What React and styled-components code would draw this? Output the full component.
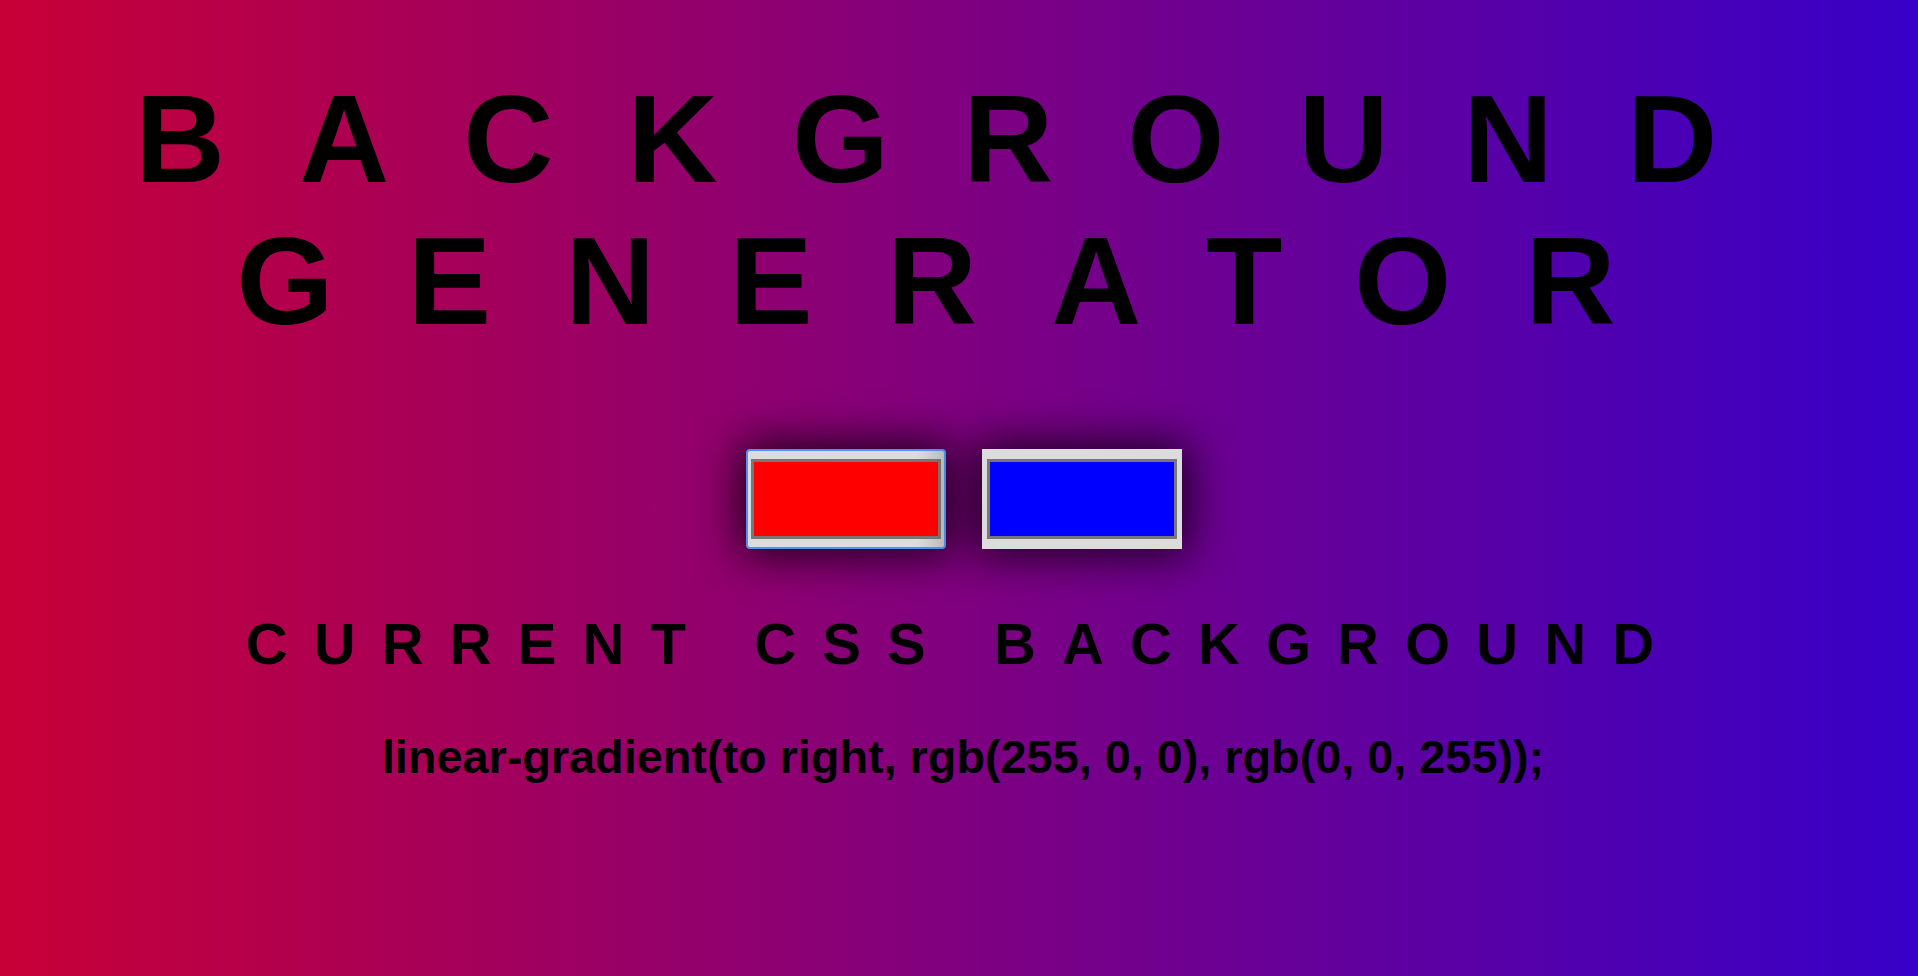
import { useState } from 'react'
import styled, { createGlobalStyle } from 'styled-components'

const GlobalStyle = createGlobalStyle`
    html, body {
        margin: 0;
        padding: 0;
    }
    body {
        font-family: "Liberation Sans", Arial, sans-serif;
        color: #000;
    }
`

const hexToRgb = (hex) => {
    const n = parseInt(hex.slice(1), 16);
    return `rgb(${(n >> 16) & 255}, ${(n >> 8) & 255}, ${n & 255})`;
}

const App = () => {
    const [color1, setColor1] = useState("#ff0000");
    const [color2, setColor2] = useState("#0000ff");

    return (
        <Page $from={color1} $to={color2}>
            <GlobalStyle />
            <Title>Background Generator</Title>
            <Pickers>
                <ColorInput type="color" value={color1} $focused onChange={(e) => setColor1(e.target.value)} />
                <ColorInput type="color" value={color2} onChange={(e) => setColor2(e.target.value)} />
            </Pickers>
            <Heading>Current CSS Background</Heading>
            <CssLine>linear-gradient(to right, {hexToRgb(color1)}, {hexToRgb(color2)});</CssLine>
        </Page>
    );
};

const Page = styled.div`
    min-height: 100vh;
    box-sizing: border-box;
    padding: 68px 0 0 8px;
    display: flex;
    flex-direction: column;
    align-items: center;
    text-align: center;
    background: linear-gradient(to right, ${p => p.$from} -38%, ${p => p.$to} 138%);
`

const Title = styled.h1`
    margin: 0;
    width: 100%;
    font-size: 125px;
    line-height: 142px;
    font-weight: 700;
    letter-spacing: 74px;
    text-transform: uppercase;
`

const Pickers = styled.div`
    display: flex;
    gap: 36px;
    margin-top: 97px;
    padding-left: 2px;
`

const ColorInput = styled.input`
    -webkit-appearance: none;
    appearance: none;
    box-sizing: border-box;
    width: 200px;
    height: 100px;
    margin: 0;
    padding: 0;
    cursor: pointer;
    border: ${p => p.$focused ? '2px solid #4f93f0' : 'none'};
    border-radius: ${p => p.$focused ? '4px' : '0'};
    background: ${p => p.$focused ? 'linear-gradient(to right, #dcdcdc 86%, #c2c2c2)' : '#dcdcdc'};
    box-shadow: 0 0 45px 6px rgba(0, 0, 0, 0.8);
    outline: none;

    &::-webkit-color-swatch-wrapper {
        padding: ${p => p.$focused ? '8px 3px' : '10px 5px'};
    }
    &::-webkit-color-swatch {
        border: 3px solid #777;
        border-radius: 0;
    }
`

const Heading = styled.h3`
    margin: 61px 0 0;
    font-size: 58px;
    font-weight: 700;
    letter-spacing: 0.45em;
    text-transform: uppercase;
`

const CssLine = styled.h3`
    margin: 53px 0 0;
    font-size: 46.8px;
    font-weight: 700;
`

export default App
